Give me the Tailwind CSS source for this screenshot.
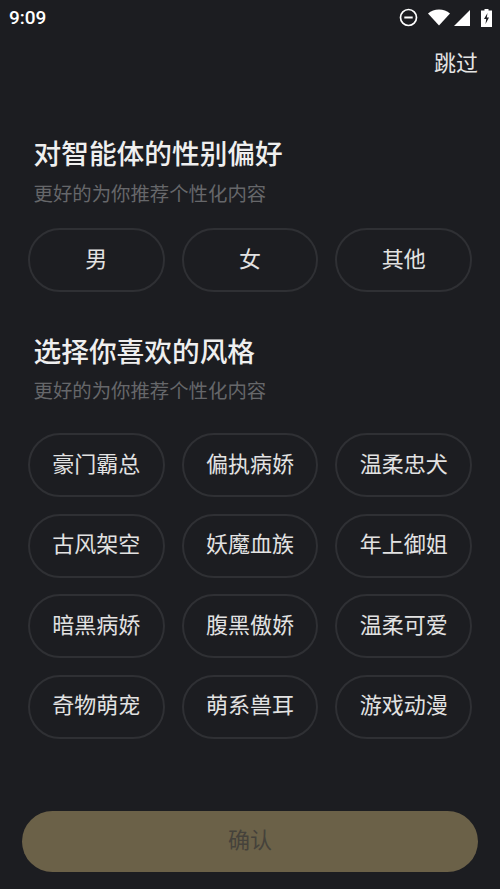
<!DOCTYPE html>
<html lang="zh-CN">
<head>
    <meta charset="UTF-8">
    <meta name="viewport" content="width=device-width, initial-scale=1.0">
    <title>偏好选择</title>
    <script src="https://cdn.jsdelivr.net/npm/@tailwindcss/browser@4"></script>
</head>
<body class="bg-[#1c1d21] font-['Roboto','Noto_Sans_CJK_SC',sans-serif]">
    <div class="w-[500px] h-[889px] flex flex-col overflow-hidden">
        <!-- Status bar -->
        <div class="h-[35px] flex items-center justify-between pl-[9px] pr-[8px] text-white">
            <span class="text-[19px] font-medium leading-none">9:09</span>
            <div class="flex items-center">
                <svg class="w-[19px] h-[19px]" viewBox="0 0 19 19" fill="none" stroke="#fff" stroke-width="1.7">
                    <circle cx="9.5" cy="9.5" r="8"></circle>
                    <path d="M5.3 9.5h8.4" stroke-width="2"></path>
                </svg>
                <svg class="w-[22px] h-[17px] ml-[10px]" viewBox="0 0 22 17" fill="#fff">
                    <path d="M0 4.5C3 1.800 6.800 0.500 11 0.500s8 1.300 11 4L11 16.500z"></path>
                </svg>
                <svg class="w-[16px] h-[16px] ml-[4px]" viewBox="0 0 16 16" fill="#fff">
                    <path d="M16 0v16H0z"></path>
                </svg>
                <svg class="w-[11px] h-[18px] ml-[11px]" viewBox="0 0 11 18">
                    <path fill="#fff" d="M3.500 0h4v1.500H11V18H0V1.500h3.500z"></path>
                    <path fill="#1c1d21" d="M6.500 4 3 10h2.200L4.500 15 8 8.500H5.800z"></path>
                </svg>
            </div>
        </div>

        <!-- Skip -->
        <div class="flex justify-end pr-[22px] pt-[14px]">
            <span class="text-[22px] leading-[30px] text-[#e4e4e4]">跳过</span>
        </div>

        <!-- Gender -->
        <div class="pl-[33.500px] mt-[58px]">
            <h2 class="text-[27.700px] leading-[36px] font-medium text-[#efefef]">对智能体的性别偏好</h2>
            <p class="text-[19.400px] leading-[28px] mt-[8px] text-[#66676a]">更好的为你推荐个性化内容</p>
        </div>
        <div class="grid grid-cols-3 gap-x-[17px] mx-[28px] mt-[19px] text-[22px] text-[#e2e2e2]">
            <div class="h-[64px] pb-[2px] rounded-full border-2 border-[#2f3034] flex items-center justify-center">男</div>
            <div class="h-[64px] pb-[2px] rounded-full border-2 border-[#2f3034] flex items-center justify-center">女</div>
            <div class="h-[64px] pb-[2px] rounded-full border-2 border-[#2f3034] flex items-center justify-center">其他</div>
        </div>

        <!-- Style -->
        <div class="pl-[33.500px] mt-[43px]">
            <h2 class="text-[27.700px] leading-[36px] font-medium text-[#efefef]">选择你喜欢的风格</h2>
            <p class="text-[19.400px] leading-[28px] mt-[7px] text-[#66676a]">更好的为你推荐个性化内容</p>
        </div>
        <div class="grid grid-cols-3 gap-x-[17px] gap-y-[16.670px] mx-[28px] mt-[27px] text-[22px] text-[#e2e2e2]">
            <div class="h-[64px] pb-[2px] rounded-full border-2 border-[#2f3034] flex items-center justify-center">豪门霸总</div>
            <div class="h-[64px] pb-[2px] rounded-full border-2 border-[#2f3034] flex items-center justify-center">偏执病娇</div>
            <div class="h-[64px] pb-[2px] rounded-full border-2 border-[#2f3034] flex items-center justify-center">温柔忠犬</div>
            <div class="h-[64px] pb-[2px] rounded-full border-2 border-[#2f3034] flex items-center justify-center">古风架空</div>
            <div class="h-[64px] pb-[2px] rounded-full border-2 border-[#2f3034] flex items-center justify-center">妖魔血族</div>
            <div class="h-[64px] pb-[2px] rounded-full border-2 border-[#2f3034] flex items-center justify-center">年上御姐</div>
            <div class="h-[64px] pb-[2px] rounded-full border-2 border-[#2f3034] flex items-center justify-center">暗黑病娇</div>
            <div class="h-[64px] pb-[2px] rounded-full border-2 border-[#2f3034] flex items-center justify-center">腹黑傲娇</div>
            <div class="h-[64px] pb-[2px] rounded-full border-2 border-[#2f3034] flex items-center justify-center">温柔可爱</div>
            <div class="h-[64px] pb-[2px] rounded-full border-2 border-[#2f3034] flex items-center justify-center">奇物萌宠</div>
            <div class="h-[64px] pb-[2px] rounded-full border-2 border-[#2f3034] flex items-center justify-center">萌系兽耳</div>
            <div class="h-[64px] pb-[2px] rounded-full border-2 border-[#2f3034] flex items-center justify-center">游戏动漫</div>
        </div>

        <!-- Confirm -->
        <div class="mx-[22px] mt-[72px] h-[61px] pb-[2px] rounded-full bg-[#6b6148] flex items-center justify-center text-[22px] text-[#45423b]">确认</div>
    </div>
</body>
</html>
